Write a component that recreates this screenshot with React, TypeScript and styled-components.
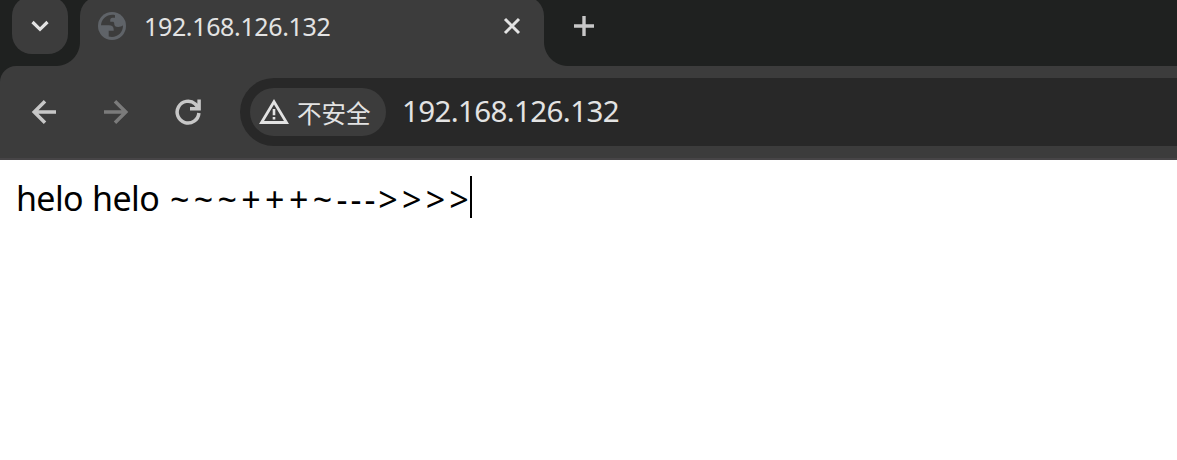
import React from "react";
import styled, { createGlobalStyle } from "styled-components";

const GlobalStyle = createGlobalStyle`
  * { box-sizing: border-box; }
  html, body { margin: 0; background: #fff; overflow: hidden; }
  body { font-family: "Noto Sans", "Noto Sans CJK SC", sans-serif; }
  svg { display: block; flex: none; }
`;

const Window = styled.div`
  height: 460px;
  display: flex;
  flex-direction: column;
  overflow: hidden;
`;

const TabStrip = styled.header`
  height: 66px;
  flex: none;
  display: flex;
  padding-left: 12px;
  background: #1f2120;
`;

const TabSearch = styled.button`
  width: 56px;
  height: 58px;
  margin: -4px 12px 0 0;
  padding: 2px 0 0;
  border: 0;
  border-radius: 20px;
  background: #3c3c3c;
  display: flex;
  align-items: center;
  justify-content: center;
`;

const Tab = styled.div`
  position: relative;
  width: 464px;
  height: 70px;
  margin-top: -4px;
  padding: 0 20px 10px 18px;
  border-radius: 20px 20px 0 0;
  background: #3c3c3c;
  display: flex;
  align-items: center;
`;

const TabFoot = styled.span<{ $side: "left" | "right" }>`
  position: absolute;
  bottom: 0;
  ${(p) => p.$side}: -24px;
  width: 24px;
  height: 24px;
  background: radial-gradient(
    circle at ${(p) => (p.$side === "left" ? "0 0" : "100% 0")},
    transparent 23.5px,
    #3c3c3c 24.5px
  );
`;

const TabTitle = styled.span`
  flex: 1;
  margin-left: 18px;
  font-size: 25px;
  line-height: 34px;
  letter-spacing: -0.35px;
  color: #e3e3e3;
`;

const NewTab = styled.button`
  width: 80px;
  height: 52px;
  padding: 0;
  border: 0;
  background: none;
  display: flex;
  align-items: center;
  justify-content: center;
`;

const ToolbarBack = styled.div`
  flex: none;
  background: #1f2120;
`;

const Toolbar = styled.nav`
  height: 94px;
  padding: 0 0 0 26px;
  border-top-left-radius: 16px;
  border-bottom: 2px solid #474547;
  background: #3c3c3c;
  display: flex;
  align-items: center;
`;

const NavButton = styled.button`
  width: 36px;
  height: 36px;
  margin-right: 36px;
  padding: 0;
  border: 0;
  background: none;
  display: flex;
  align-items: center;
  justify-content: center;
`;

const AddressBar = styled.div`
  flex: 1;
  height: 68px;
  margin-left: -2px;
  padding-left: 10px;
  border-radius: 34px 0 0 34px;
  background: #282828;
  display: flex;
  align-items: center;
`;

const SecurityChip = styled.div`
  width: 136px;
  height: 48px;
  padding-left: 9px;
  border-radius: 24px;
  background: #3c3c3c;
  display: flex;
  align-items: center;
  gap: 8px;
`;

const ChipLabel = styled.span`
  padding-top: 2px;
  font-family: "Noto Sans CJK SC", sans-serif;
  font-size: 24.5px;
  line-height: 34px;
  color: #e3e3e3;
`;

const Url = styled.span`
  margin: 0 0 2px 16px;
  font-size: 29.5px;
  line-height: 40px;
  letter-spacing: -0.62px;
  color: #e3e3e3;
`;

const Page = styled.main`
  flex: 1;
  padding: 16px 0 0 16px;
  background: #fff;
  display: flex;
  align-items: flex-start;
  font-size: 34px;
  line-height: 44px;
  color: #000;
  white-space: pre;
`;

const Run = styled.span<{ $spacing: number; $drop?: number }>`
  letter-spacing: ${(p) => p.$spacing}px;
  word-spacing: 1px;
  padding-top: ${(p) => p.$drop ?? 0}px;
`;

const Caret = styled.span`
  width: 2px;
  height: 42px;
  background: #000;
`;

const GlobeIcon = () => (
  <svg width="28" height="28" viewBox="0 0 28 28">
    <circle cx="14" cy="14" r="14" fill="#5f6368" />
    <path
      fill="#3c3c3c"
      d="M17 3.2C10 1.5 3.5 6.500 3 13.200h8c3 0 4.700 1.600 4.700 4.200v1.400h-5v5.700C18 26.500 25.200 21.500 25 13.300c-1 1.200-3 1.700-4.800 1.700-2.700 0-4-1-4-3.500 0-1.300-.5-1.800-1.800-1.800h-2.200V8.300c0-1.600.8-2.500 2.300-2.500H17z"
    />
  </svg>
);

const WarningIcon = () => (
  <svg width="30" height="26" viewBox="0 0 30 26" fill="none">
    <path d="M15 2.800 27.500 23.500h-25z" stroke="#e3e3e3" strokeWidth="2.800" />
    <path d="M15 10v6.200M15 18v2.600" stroke="#e3e3e3" strokeWidth="2.600" />
  </svg>
);

export default function App() {
  return (
    <Window>
      <GlobalStyle />
      <TabStrip>
        <TabSearch aria-label="Search tabs">
          <svg width="18" height="12" viewBox="0 0 18 12" fill="none">
            <path d="m1.500 2 7.500 7.300L16.500 2" stroke="#e3e3e3" strokeWidth="3.200" />
          </svg>
        </TabSearch>
        <Tab>
          <TabFoot $side="left" />
          <GlobeIcon />
          <TabTitle>192.168.126.132</TabTitle>
          <svg width="24" height="24" viewBox="0 0 24 24" fill="none">
            <path d="m5 5 14 14M19 5 5 19" stroke="#e3e3e3" strokeWidth="3" />
          </svg>
          <TabFoot $side="right" />
        </Tab>
        <NewTab aria-label="New tab">
          <svg width="20" height="20" viewBox="0 0 20 20" fill="none">
            <path d="M10 0v20M0 10h20" stroke="#c7c7c7" strokeWidth="3.400" />
          </svg>
        </NewTab>
      </TabStrip>
      <ToolbarBack>
        <Toolbar>
          <NavButton aria-label="Back">
            <svg width="26" height="26" viewBox="0 0 26 26" fill="none">
              <path d="M14 2.200 3.200 13 14 23.800M3.500 13H25" stroke="#c7c7c7" strokeWidth="3.500" />
            </svg>
          </NavButton>
          <NavButton aria-label="Forward">
            <svg width="26" height="26" viewBox="0 0 26 26" fill="none">
              <path d="M12 2.200 22.800 13 12 23.800M22.500 13H1" stroke="#7b7b7b" strokeWidth="3.500" />
            </svg>
          </NavButton>
          <NavButton aria-label="Reload">
            <svg width="26" height="26" viewBox="0 0 26 26" fill="none">
              <path
                d="M23.900 14A10.900 10.900 0 1 1 20.300 5l3.200 3.800M24.100.5v9.300H15"
                stroke="#c7c7c7"
                strokeWidth="3.500"
              />
            </svg>
          </NavButton>
          <AddressBar>
            <SecurityChip>
              <WarningIcon />
              <ChipLabel>不安全</ChipLabel>
            </SecurityChip>
            <Url>192.168.126.132</Url>
          </AddressBar>
        </Toolbar>
      </ToolbarBack>
      <Page>
        <Run $spacing={-0.65}>helo helo</Run>
        <Run $spacing={1}> </Run>
        <Run $spacing={4.35} $drop={1}>~~~+++~</Run>
        <Run $spacing={3} $drop={1}>---</Run>
        <Run $spacing={4.2} $drop={1}>&gt;&gt;&gt;</Run>
        <Run $spacing={1.6} $drop={1}>&gt;</Run>
        <Caret />
      </Page>
    </Window>
  );
}
